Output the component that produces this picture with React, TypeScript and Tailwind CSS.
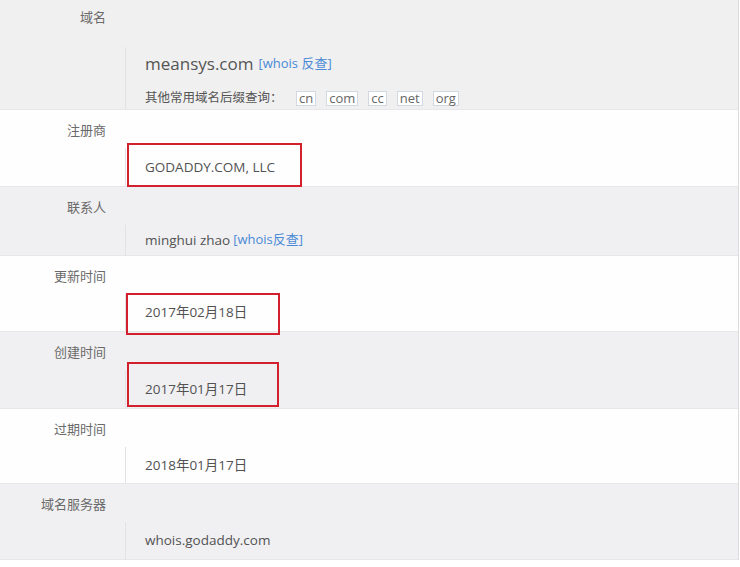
import React from 'react';

// whois 查询结果表（标签在上，值在下）
const font = "font-['Open_Sans','Noto_Sans_CJK_SC',sans-serif]";

const suffixes = ['cn', 'com', 'cc', 'net', 'org'];

interface RowProps {
  label: string;
  gray?: boolean;
  height: string;
  children: React.ReactNode;
  marked?: string; // 红框标注的位置
}

const Row: React.FC<RowProps> = ({ label, gray, height, children, marked }) => (
  <div
    className={`relative flex flex-col border-b border-[#e7e7ea] ${height} ${
      gray ? 'bg-[#f0f0f2]' : 'bg-[#fefefe]'
    }`}
  >
    <div className="h-[38px] w-[106px] shrink-0 text-right text-[13px] leading-[40px] text-[#6a6a6a]">
      {label}
    </div>
    <div className="ml-[125px] flex flex-1 items-center border-l border-[#e2e2e4] pl-[19px] text-[13.5px] text-[#525252]">
      {children}
    </div>
    {marked && <div className={`absolute z-10 border-2 border-[#d2202c] ${marked}`} />}
  </div>
);

export default function App() {
  return (
    <div className={`${font} h-[567px] w-[740px] bg-white`}>
      <div className="w-[739px] border-r border-[#dcdcde]">
        {/* 域名 */}
        <div className="flex h-[110px] flex-col border-b border-[#e7e7ea] bg-[#f0f0f0]">
          <div className="h-[34px] w-[106px] shrink-0 text-right text-[13px] leading-[34px] text-[#6a6a6a]">
            域名
          </div>
          <div className="ml-[125px] mt-[13px] flex-1 border-l border-[#e2e2e4] pl-[19px] pt-[5px]">
            <div className="flex h-[24px] items-center">
              <span className="text-[17px] text-[#555]">meansys.com</span>
              <a className="ml-[5px] text-[13px] text-[#4a8ad6]">[whois 反查]</a>
            </div>
            <div className="mt-[14px] flex h-[16px] items-center">
              <span className="w-[151px] text-[12.5px] text-[#555]">其他常用域名后缀查询：</span>
              <div className="flex gap-[10px]">
                {suffixes.map((s) => (
                  <span
                    key={s}
                    className="flex h-[15px] items-center border border-[#d3d9e2] bg-white px-[2px] text-[13px] leading-none text-[#666]"
                  >
                    {s}
                  </span>
                ))}
              </div>
            </div>
          </div>
        </div>

        <Row label="注册商" height="h-[77px]" marked="left-[127px] top-[33px] h-[44px] w-[175px]">
          GODADDY.COM, LLC
        </Row>

        <Row label="联系人" gray height="h-[69px]">
          <span>minghui zhao</span>
          <a className="ml-[3px] text-[13px] text-[#4a8ad6]">[whois反查]</a>
        </Row>

        <Row label="更新时间" height="h-[76px]" marked="left-[126px] top-[37px] h-[42px] w-[154px]">
          2017年02月18日
        </Row>

        <Row label="创建时间" gray height="h-[77px]" marked="left-[127px] top-[30px] h-[45px] w-[152px]">
          2017年01月17日
        </Row>

        <Row label="过期时间" height="h-[75px]">
          2018年01月17日
        </Row>

        <Row label="域名服务器" gray height="h-[76px]">
          whois.godaddy.com
        </Row>
      </div>
    </div>
  );
}
